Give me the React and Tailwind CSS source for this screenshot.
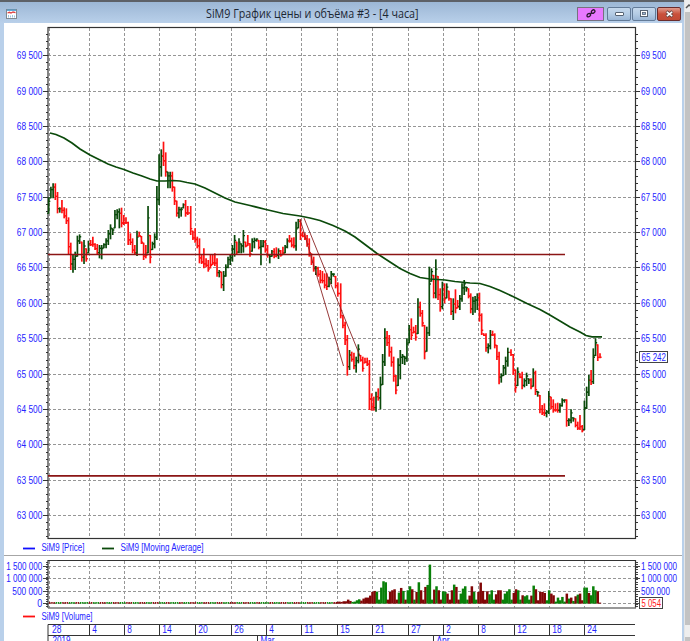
import React from 'react';

const SANS = "font-['Liberation_Sans',Arial,sans-serif]";
const GREEN = '#0b4a0b';
const RED = '#ff1010';
const GRID_X = [49.5, 89.5, 124.5, 159.5, 195.5, 231.5, 266.5, 301.5, 337.5, 372.5, 408.5, 443.5, 478.5, 514.5, 549.5, 584.5];
const DAYS = ['28', '4', '8', '14', '20', '26', '4', '11', '15', '21', '27', '2', '8', '12', '18', '24'];
const PRICES = ['69 500', '69 000', '68 500', '68 000', '67 500', '67 000', '66 500', '66 000', '65 500', '65 000', '64 500', '64 000', '63 500', '63 000'];

// high-low bars, stored in thirds of a pixel from each segment's origin
const SEGMENTS = [
  {
    x: 48.7, y: 120, end: 190,
    bars: 'g232-280 g200-235 g190-235 r190-240 r216-280 g262-278 r240-280 r262-295 r265-312 r292-405 r368-450 g405-458 g395-450 g347-410 g343-372 r365-425 g360-432 r385-425 g362-400 r360-378 r350-380 r370-390 r372-405 g375-415 g375-418 g370-385 g355-385 g330-375 g313-358 g325-345 g270-325 g268-298 g265-325 r263-322 r285-315 r292-312 r305-375 r340-375 r355-400 r375-405 g332-408 r335-350 r348-372 r368-420 r375-415 g258-400 r345-430 g365-390 g340-385 g198-360 g103-255 g88-170 r65-138 r97-170 g155-205 g155-205 r155-215 r200-255 r242-290 g260-295 g262-290 g250-265 r240-290 r258-285',
  },
  {
    x: 190.7, y: 160, end: 340,
    bars: 'r138-225 r212-240 r205-248 r230-265 r235-310 r285-312 r265-325 r295-322 r300-335 r285-325 r285-315 r280-318 r295-350 g330-352 r335-385 g333-393 g313-350 g290-325 g285-315 g255-305 g225-290 r245-285 g235-280 g250-280 g210-278 r245-262 r225-258 r250-290 g235-275 g233-265 g235-245 r240-268 g240-316 g240-262 r240-278 r255-293 g282-310 g270-290 r265-295 r262-292 g265-297 r270-290 r260-285 g255-280 g235-265 r225-248 r233-262 r232-265 g185-272 g177-205 r178-240 r215-232 r220-240 r225-260 r235-290 r280-315 r290-335 g318-345 r320-350 r330-370 r333-370 r340-385 r340-390 g350-382 g333-372 g340-350 r348-385 r367-410',
  },
  {
    x: 340.7, y: 210, end: 429,
    bars: 'r220-325 r315-355 r335-405 r375-497 g420-480 r425-455 r428-478 g440-488 g403-460 r435-455 r440-485 r443-460 r443-468 r450-600 r550-602 r560-602 g545-605 r535-572 g500-598 g432-525 g355-468 r363-408 r375-440 r410-470 r440-515 r495-553 g445-528 g420-508 g432-462 g438-465 g385-455 g345-400 r325-390 r350-370 r345-392 g265-372 r275-320 r300-350 r345-448 g350-425',
  },
  {
    x: 429.3, y: 250, end: 510,
    bars: 'g50-258 g55-95 r75-145 g28-145 r78-150 r115-185 g95-178 r100-160 g100-145 r122-152 r145-195 g145-210 r118-190 r150-175 g135-180 g100-155 g90-135 g110-125 r115-145 r130-190 g140-195 g138-188 g130-180 r128-215 r190-255 r250-258 r250-305 g280-310 g240-298 r242-258 r250-295 r285-330 r305-403 g370-398 g345-378 g320-375 g293-350',
  },
  {
    x: 511, y: 310, end: 600,
    bars: 'r118-138 r132-195 r178-248 g172-228 r190-205 r185-238 g205-232 g188-228 g205-222 r205-238 g175-230 r182-255 g243-260 r255-310 r285-315 r280-318 g300-322 g243-312 r260-298 r268-308 r280-305 r278-308 g280-308 g265-290 g268-278 r268-350 g325-348 g298-340 g322-335 r325-352 r335-360 r315-360 r345-367 g272-360 g230-297 g195-258 r180-225 g115-222 g85-138 r103-153 r130-145',
  },
];

const AVERAGE = '50,133 56,134.5 64,138 72,143 80,149 90,155 100,160 108,164 116,167 124,169.5 133,173 142,176 150,179 157,181 165,181 173,180.5 180,181 187,182.5 195,184 205,188 215,193 225,198 235,202 250,205.5 266,209.5 283,213.5 300,216 310,218 320,220.5 333,225.5 345,231 355,237 365,244.5 377,253.5 390,262 400,268.5 410,273.5 420,277.5 430,279 445,280 455,281.5 470,283 480,283.5 490,286.5 500,290.5 514,297 527,303.5 540,309.5 549,314.5 560,321 570,327 580,332 586,335.5 592,336.8 602,336.8';

// bar heights in thirds of a pixel, four sessions a day
const VOLUMES = 'r5 r6 r5 r7 r7 r12 r8 g5 g6 g10 g13 r9 r15 r18 r18 r24 r35 r38 g36 g12 g48 g67 g64 r12 r35 r40 r43 r12 g33 r47 g38 r12 g40 g52 r43 g12 r35 g64 r40 r12 r50 g56 g117 g12 r42 g52 r40 r12 g37 g35 r30 r12 r40 g57 r50 r12 g30 g45 g52 g12 r24 r52 g35 g12 r35 r63 r38 r12 r37 g28 g40 g12 r28 r40 r40 g12 g30 g37 g43 g12 r32 r43 g40 g12 r25 g22 g25 g12 r24 g54 r43 r10 r35 r35 r32 g10 g40 r30 r25 g6 g18 g10 g20 g6 r30 g15 r18 g8 r22 g27 r30 r10 g48 g48 r32 g25 g52 g40 r37 r3';

function Label({ x, y, width, anchor = 'end', fill = '#2424ff', children }) {
  return (
    <text x={x} y={y} textAnchor={anchor} textLength={width} lengthAdjust="spacingAndGlyphs" fill={fill} fontSize="10">
      {children}
    </text>
  );
}

function PriceBars() {
  let last = null;
  const marks = [];
  SEGMENTS.forEach((seg) => {
    const items = seg.bars.split(' ');
    const step = (seg.end - seg.x) / (items.length - (seg.end === 600 ? 1 : 0));
    items.forEach((item, i) => {
      const [hi, lo] = item.slice(1).split('-').map((n) => seg.y + Number(n) / 3);
      const up = item[0] === 'g';
      const x = seg.x + i * step;
      const close = up ? hi + (lo - hi) * 0.25 : hi + (lo - hi) * 0.78;
      const open = last === null ? lo : Math.min(lo - 0.5, Math.max(hi + 0.5, last));
      last = close;
      marks.push(
        <g key={`${seg.x}-${i}`} stroke={up ? GREEN : RED}>
          <path d={`M${x} ${hi}V${lo}`} strokeWidth="1.7" />
          <path d={`M${x - 1.6} ${open}H${x}M${x} ${close}H${x + 1.6}`} strokeWidth="1.3" />
        </g>
      );
    });
  });
  return <g>{marks}</g>;
}

function PriceChart() {
  const minor = [];
  for (let i = -3; i < 69; i++) {
    if (i % 5 !== 0) minor.push(32.5 + i * 7.076);
  }
  return (
    <svg width="678" height="518" viewBox="4 23 678 518" className="block">
      <g stroke="#969696" strokeDasharray="3 2">
        {GRID_X.map((x) => <path key={x} d={`M${x} 28V538`} />)}
        {PRICES.map((p, i) => <path key={p} d={`M48 ${Math.round(55.2 + i * 35.38) + 0.5}H635`} />)}
      </g>
      <g stroke="#333">
        {minor.map((y) => {
          const ty = Math.round(y + 23 - 0.2) + 0.5;
          return ty > 29 && ty < 538 ? <path key={y} d={`M46 ${ty}H48M636 ${ty}H638`} /> : null;
        })}
        {PRICES.map((p, i) => {
          const y = Math.round(55.2 + i * 35.38) + 0.5;
          return <path key={p} d={`M43 ${y}H48M636 ${y}H640`} />;
        })}
      </g>
      <rect x="48" y="27.5" width="587.5" height="511" fill="none" stroke="#333" strokeWidth="1.2" />
      <PriceBars />
      <polyline points={AVERAGE} fill="none" stroke={GREEN} strokeWidth="1.7" />
      <path d="M48 254.5H565M48 475.8H565" stroke="#8b1515" strokeWidth="1.7" />
      <path d="M300 219L343.5 366M304 218L360 356" stroke="#8b2424" strokeWidth="0.9" fill="none" />
      {PRICES.map((p, i) => (
        <g key={p}>
          <Label x={42.3} y={59.2 + i * 35.38} width={25.5}>{p}</Label>
          <Label x={641} y={59.2 + i * 35.38} width={25} anchor="start">{p}</Label>
        </g>
      ))}
      <rect x="639.5" y="351.5" width="28" height="11" fill="#fff" stroke="#444" />
      <Label x={641.5} y={360.7} width={24.5} anchor="start">65 242</Label>
    </svg>
  );
}

function VolumeChart() {
  const items = VOLUMES.split(' ');
  const rows = [['1 500 000', 566.5, 36], ['1 000 000', 578.5, 36], ['500 000', 591.5, 30], ['0', 603.5, 5]];
  const ticks = [];
  for (let y = 562; y < 608; y += 2.45) ticks.push(Math.round(y) + 0.5);
  const step = (599.8 - 337) / (items.length - 1);
  return (
    <svg width="678" height="53" viewBox="4 557 678 53" className="block">
      <g stroke="#969696" strokeDasharray="3 2">
        {GRID_X.map((x) => <path key={x} d={`M${x} 561V608`} />)}
        {rows.map(([label, y]) => <path key={label} d={`M48 ${y}H635`} />)}
      </g>
      <g stroke="#444">
        {ticks.map((y) => <path key={y} d={`M46 ${y}H48M636 ${y}H638`} />)}
        {rows.map(([label, y]) => <path key={label} d={`M43 ${y}H48M636 ${y}H640`} />)}
      </g>
      <path d="M48 608V560.5H635.5V608" fill="none" stroke="#333" strokeWidth="1.2" />
      <path d="M48 608H636" stroke="#777" strokeWidth="1.4" />
      {Array.from({ length: 131 }, (_, i) => (
        <rect key={i} x={49 + i * 2.205} y={602} width="1.5" height="1.8" fill={(i * 7 + 3) % 41 < 19 ? '#8b1212' : '#138a13'} />
      ))}
      {items.map((item, i) => {
        const h = Number(item.slice(1)) / 3;
        return <rect key={i} x={335.9 + i * step} y={603.6 - h} width="2.5" height={h} fill={item[0] === 'g' ? '#098009' : '#800606'} />;
      })}
      {rows.map(([label, y, w]) => (
        <g key={label}>
          <Label x={42.3} y={y + 3.5} width={w}>{label}</Label>
          {label !== '0' && <Label x={641} y={y + 3.5} width={label === '500 000' ? 29 : w} anchor="start">{label}</Label>}
        </g>
      ))}
      <rect x="639.5" y="597.5" width="23" height="11" fill="#fff" stroke="#444" />
      <Label x={641.5} y={606.7} width={19.5} anchor="start" fill="#ff2020">5 054</Label>
    </svg>
  );
}

function TimeAxis() {
  return (
    <svg width="678" height="18" viewBox="4 623 678 18" className="block">
      <path d="M48 641V624.5H635M48 635.5H635" fill="none" stroke="#333" />
      {GRID_X.map((x, i) => (
        <g key={x}>
          {i > 0 && <path d={`M${x} 624V635`} stroke="#333" />}
          <Label x={i ? x + 2.8 : 52} y={633.4} width={DAYS[i].length === 2 ? 9.5 : 4.6} anchor="start">{DAYS[i]}</Label>
        </g>
      ))}
      <path d="M257.5 636V641M433.5 636V641" stroke="#333" />
      <Label x={52.5} y={643.5} width={18} anchor="start">2019</Label>
      <Label x={260.5} y={643.5} width={14} anchor="start">Mar</Label>
      <Label x={436.5} y={643.5} width={13} anchor="start">Apr</Label>
    </svg>
  );
}

function Legend({ color, label, width }) {
  return (
    <span className="flex items-center gap-[6px]">
      <svg width="12" height="3"><rect y="0.6" width="12" height="1.8" fill={color} /></svg>
      <svg width={width + 2} height="14" className="overflow-visible">
        <Label x={0.5} y={10.4} width={width} anchor="start">{label}</Label>
      </svg>
    </span>
  );
}

function TitleBar() {
  const button = 'flex h-[14px] w-[24px] items-center justify-center rounded-[2px] border border-[#637b98] bg-gradient-to-b from-[#c5d8ec] via-[#b4cce5] to-[#9ab6d6]';
  return (
    <header className="flex h-[21px] items-center bg-gradient-to-b from-[#9cb7d5] to-[#b9d0ea] pt-[2px] pr-[3px] pl-[6px]">
      <svg width="11" height="10" viewBox="0 0 11 10">
        <rect x="0.5" y="0.5" width="10" height="9" fill="#fff" stroke="#808890" />
        <path d="M1 1.2H10" stroke="#4fa3d8" strokeWidth="1.4" />
        <path d="M1.5 4L3.5 3.3L5 4L7 3L9.5 3.6" fill="none" stroke="#e04040" strokeWidth="1.3" />
        <path d="M2.5 6V8.5M4.5 6.5V8.5M6.5 6V8.5M8.5 6.5V8.5" stroke="#9cc4e0" />
      </svg>
      <svg width="215" height="19" className="ml-[189px] overflow-visible">
        <text x="0" y="13.6" textLength="212.5" lengthAdjust="spacingAndGlyphs" fontSize="12" fill="#1c2733" fontFamily="Open Sans, Noto Sans, sans-serif">
          SiM9 График цены и объёма #3 - [4 часа]
        </text>
      </svg>
      <div className="ml-auto flex items-center">
        <button className="mr-[3px] flex h-[14px] w-[27px] items-center justify-center border border-[#77717f] bg-[#e879ff]">
          <svg width="10" height="9" viewBox="0 0 10 9" fill="none" stroke="#2b1830" strokeWidth="1.3">
            <ellipse cx="2.8" cy="6.2" rx="2" ry="1.5" transform="rotate(-40 2.8 6.2)" />
            <ellipse cx="7.1" cy="2.6" rx="2" ry="1.5" transform="rotate(-40 7.1 2.6)" />
            <path d="M3.8 5.4L6.2 3.4" />
          </svg>
        </button>
        <button className={`${button} mr-px`}>
          <svg width="9" height="5"><rect x="0.5" y="1.5" width="8" height="3" rx="0.5" fill="#fff" stroke="#566373" /></svg>
        </button>
        <button className={`${button} mr-px`}>
          <svg width="8" height="7"><rect x="0.5" y="0.5" width="7" height="6" fill="#fff" stroke="#566373" /><rect x="2.5" y="2.5" width="3" height="2" fill="#9ab6d6" stroke="#566373" strokeWidth="0.8" /></svg>
        </button>
        <button className="flex h-[14px] w-[24px] items-center justify-center rounded-[2px] border border-[#6b2c2c] bg-gradient-to-b from-[#df9a8c] via-[#c9503b] to-[#c14a35]">
          <svg width="9" height="8" viewBox="0 0 9 8"><path d="M1.5 1.5L7.5 6.5M7.5 1.5L1.5 6.5" stroke="#5d4040" strokeWidth="3" /><path d="M1.8 1.8L7.2 6.2M7.2 1.8L1.8 6.2" stroke="#fff" strokeWidth="1.6" /></svg>
        </button>
      </div>
    </header>
  );
}

export default function App() {
  return (
    <div className={`flex h-[641px] w-[690px] overflow-hidden bg-[#c3c3c3] ${SANS}`}>
      <main className="flex w-[684px] flex-col border-t-2 border-[#5d6167] bg-[#b9d0ea]">
        <TitleBar />
        <div className="ml-1 flex h-[618px] w-[678px] flex-col bg-white">
          <PriceChart />
          <div className="flex h-[14px] items-center gap-[16px] pl-[19px]">
            <Legend color="#1010ff" label="SiM9 [Price]" width={43} />
            <Legend color="#0b4a0b" label="SiM9 [Moving Average]" width={83} />
          </div>
          <div className="h-[2px] border-t border-[#a6a6a6]" />
          <VolumeChart />
          <div className="flex h-[13px] items-center pl-[19px]">
            <Legend color="#ff1010" label="SiM9 [Volume]" width={51} />
          </div>
          <TimeAxis />
        </div>
      </main>
      <aside className="flex w-[6px] flex-col border-l border-[#e5e5e5] bg-[#c3c3c3]">
        <div className="flex h-[12px] items-center bg-[#eee]">
          <svg width="5" height="5"><path d="M1 4L4 1L5 2" fill="none" stroke="#555" strokeWidth="1.5" /></svg>
        </div>
        <div className="mt-[613px] h-[12px] bg-[#eee]" />
      </aside>
    </div>
  );
}
